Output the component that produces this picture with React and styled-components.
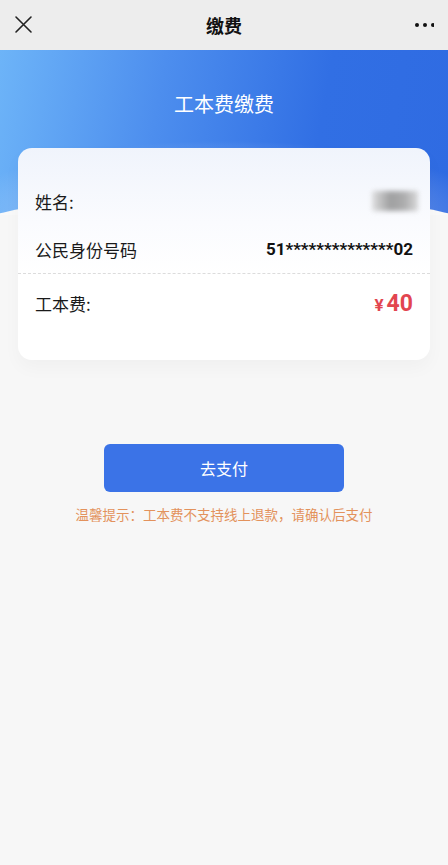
import React from "react";
import styled, { createGlobalStyle } from "styled-components";

const GlobalStyle = createGlobalStyle`
  body {
    margin: 0;
    background: #f7f7f7;
    font-family: "Noto Sans CJK SC", "Noto Sans", sans-serif;
  }
`;

const Page = styled.div`
  min-height: 865px;
  background: #f7f7f7;
`;

const NavBar = styled.div`
  height: 50px;
  background: #ededed;
  display: flex;
  align-items: center;
  justify-content: space-between;
  padding: 0 14px;
  box-sizing: border-box;
`;

const NavTitle = styled.div`
  font-size: 18px;
  font-weight: bold;
  color: #111;
`;

const NavIcon = styled.svg`
  width: 20px;
  height: 20px;
  display: block;
`;

const Banner = styled.div`
  position: relative;
  height: 165px;
  overflow: hidden;
  box-sizing: border-box;
  padding-top: 40px;
  background:
    radial-gradient(ellipse 60% 45% at 50% 100%, rgba(255, 255, 255, 0.6), rgba(255, 255, 255, 0) 100%),
    linear-gradient(100deg, #6db4f8 0%, #4d8eee 35%, #316fe4 70%, #2f6be2 100%);

  /* concave bottom edge */
  &::after {
    content: "";
    position: absolute;
    left: -36px;
    width: 520px;
    top: 145px;
    height: 74px;
    border-radius: 50%;
    background: #f9f9f9;
  }
`;

const BannerTitle = styled.div`
  position: relative;
  z-index: 1;
  text-align: center;
  font-size: 20px;
  line-height: 28px;
  color: #fff;
  font-weight: 400;
`;

const Card = styled.div`
  position: relative;
  z-index: 2;
  margin: -67px 18px 0;
  border-radius: 14px;
  padding: 29px 0 28px;
  background: linear-gradient(180deg, #f0f4fc 0%, #fafbfe 35%, #ffffff 60%);
  box-shadow: 0 8px 18px rgba(0, 0, 0, 0.03);
`;

const Row = styled.div`
  display: flex;
  align-items: center;
  justify-content: space-between;
  height: ${(p) => p.$h || 48}px;
  padding: 0 17px;
  border-bottom: ${(p) => (p.$dashed ? "1px dashed #dcdcdc" : "none")};
`;

const Label = styled.span`
  font-size: 17px;
  color: #1a1a1a;
`;

const Masked = styled.span`
  font-family: Roboto, "Liberation Sans", sans-serif;
  font-size: 17px;
  font-weight: bold;
  color: #111;
`;

const BlurName = styled.span`
  width: 46px;
  height: 20px;
  margin-right: -5px;
  background: linear-gradient(90deg, #d8d8d8 0%, #8a8a8a 40%, #9a9a9a 70%, #d0d0d0 100%);
  filter: blur(2.5px);
  opacity: 0.8;
`;

const Price = styled.span`
  font-family: Roboto, "Liberation Sans", sans-serif;
  font-weight: bold;
  color: #e2454f;
  font-size: 23px;
  display: flex;
  align-items: baseline;
  gap: 3px;
`;

const Yen = styled.span`
  font-size: 17px;
`;

const Actions = styled.div`
  display: flex;
  flex-direction: column;
  align-items: center;
  margin-top: 84px;
`;

const PayButton = styled.button`
  width: 240px;
  height: 48px;
  border: none;
  border-radius: 6px;
  background: #3b73e7;
  color: #fff;
  font-family: inherit;
  font-size: 16px;
`;

const Tip = styled.div`
  margin-top: 13px;
  font-size: 13.5px;
  line-height: 18px;
  color: #e3925c;
`;

export default function App() {
  return (
    <Page>
      <GlobalStyle />
      <NavBar>
        <NavIcon viewBox="0 0 20 20">
          <path d="M2 2 L17 17 M17 2 L2 17" stroke="#222" strokeWidth="1.6" strokeLinecap="round" />
        </NavIcon>
        <NavTitle>缴费</NavTitle>
        <NavIcon viewBox="0 0 20 20">
          <circle cx="3" cy="10" r="2" fill="#111" />
          <circle cx="11" cy="10" r="2" fill="#111" />
          <circle cx="19" cy="10" r="2" fill="#111" />
        </NavIcon>
      </NavBar>
      <Banner>
        <BannerTitle>工本费缴费</BannerTitle>
      </Banner>
      <Card>
        <Row>
          <Label>姓名:</Label>
          <BlurName />
        </Row>
        <Row $dashed>
          <Label>公民身份号码</Label>
          <Masked>51**************02</Masked>
        </Row>
        <Row $h={58}>
          <Label>工本费:</Label>
          <Price>
            <Yen>¥</Yen>40
          </Price>
        </Row>
      </Card>
      <Actions>
        <PayButton>去支付</PayButton>
        <Tip>温馨提示：工本费不支持线上退款，请确认后支付</Tip>
      </Actions>
    </Page>
  );
}
